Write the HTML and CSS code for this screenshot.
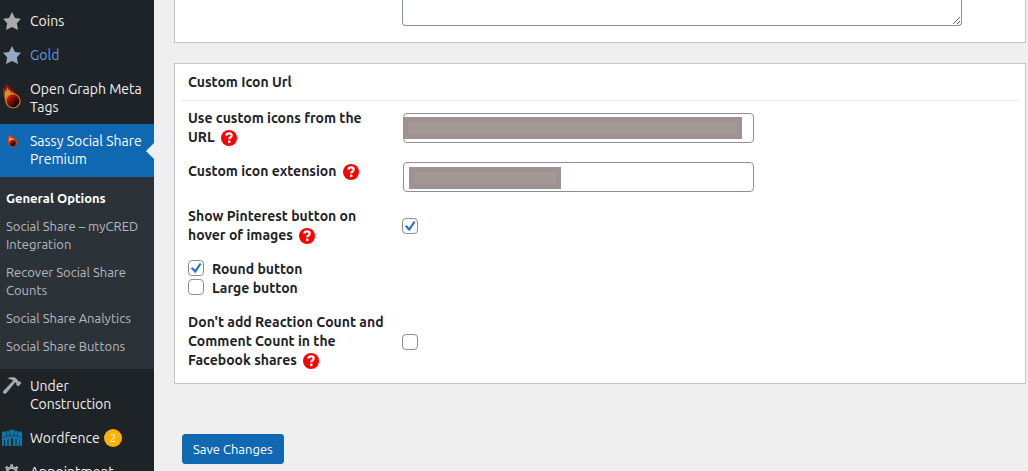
FILE: index.html
```html
<!DOCTYPE html>
<html lang="en">
<head>
    <meta charset="UTF-8">
    <meta name="viewport" content="width=device-width, initial-scale=1.0">
    <title>Sassy Social Share Premium</title>
    <link rel="stylesheet" href="styles.css">
</head>
<body>
    <svg class="defs" aria-hidden="true">
        <symbol id="star" viewBox="0 0 20 20">
            <path fill="currentColor" d="M10 1l3 6 6 .75-4.12 4.62L16 19l-6-3-6 3 1.13-6.63L1 7.75 7 7z"/>
        </symbol>
        <symbol id="help" viewBox="0 0 16 16">
            <circle cx="8" cy="8" r="8" fill="#ff0000"/>
            <path d="M5.300 5.700C5.500 3.900 6.500 3.400 8 3.400c1.600 0 2.700.8 2.700 2.100 0 1.800-2.500 1.700-2.500 3.700" fill="none" stroke="#fff" stroke-width="2.200"/>
            <rect x="7" y="10.600" width="2.400" height="2.400" fill="#fff"/>
        </symbol>
        <symbol id="comet" viewBox="0 0 20 26">
            <path fill="#b3150c" d="M2 15C1 10 .5 7 1.500 4l1.500 3L4 0l2 5 1-2 2 5 1-2 2 4 1-1 1 3c3 2 4.500 4 4.500 7a7.500 7.500 0 0 1-14 2C3 19 2.500 17 2 15z"/>
            <path fill="#c99a25" d="M2.500 13l.5-6 1.500 2L5 4l2 4 .5-2 1.500 4 1.500-1 2 3c-4 0-6 2-6.500 6L4 19z"/>
            <circle cx="11" cy="18" r="7" fill="url(#ball)" stroke="#c8791f" stroke-width="1.200"/>
        </symbol>
        <symbol id="comet-mini" viewBox="0 0 20 14">
            <path fill="#e23a12" d="M6 6V1l2 2 .5-2 2 2 1.500 1c3 2 3 3 3 5a4.500 4.500 0 0 1-8.500 1.500z"/>
            <path fill="#ffc02e" d="M7 7l.5-4 1.500 2 1-1 2 2c-2 0-4 1-4 4z"/>
            <circle cx="10.500" cy="9" r="3.200" fill="url(#ball)"/>
        </symbol>
        <linearGradient id="ball" x1="0" y1="0" x2="1" y2="1">
            <stop offset=".2" stop-color="#c81a10"/>
            <stop offset=".75" stop-color="#160504"/>
        </linearGradient>
    </svg>

    <div class="layout">
        <nav class="sidebar">
            <ul class="menu">
                <li><a href="#" class="menu-link"><svg class="icon"><use href="#star"/></svg><span>Coins</span></a></li>
                <li><a href="#" class="menu-link hovered"><svg class="icon"><use href="#star"/></svg><span>Gold</span></a></li>
                <li><a href="#" class="menu-link"><svg class="icon comet"><use href="#comet"/></svg><span>Open Graph Meta Tags</span></a></li>
                <li>
                    <a href="#" class="menu-link current"><svg class="icon comet-small"><use href="#comet-mini"/></svg><span>Sassy Social Share Premium</span></a>
                    <ul class="submenu">
                        <li><a href="#" class="active">General Options</a></li>
                        <li><a href="#">Social Share – myCRED Integration</a></li>
                        <li><a href="#">Recover Social Share Counts</a></li>
                        <li><a href="#">Social Share Analytics</a></li>
                        <li><a href="#">Social Share Buttons</a></li>
                    </ul>
                </li>
                <li><a href="#" class="menu-link">
                    <svg class="icon" viewBox="0 0 20 20"><path fill="currentColor" d="M5 2.500C9 .8 12.500 1 14.500 2.800l2.200 2.700 1.200-.2 1.400 2-3 3.200-2-1.500.2-1.500-1.300-1.200L4.500 17c-1 1-2.200 1-3 .2s-.8-1.800.2-2.800L11.200 4.800C9.500 3.300 7.500 2.700 5 2.500z"/></svg>
                    <span>Under Construction</span></a></li>
                <li><a href="#" class="menu-link">
                    <svg class="icon fence" viewBox="0 0 20 20"><path fill="currentColor" d="M0 4.500L1.500 3 3 4.200 5 2.500l1.300 1L8 1.700l1 .8 1-1.500 1 1.500 1-.8 1.700 1.800 1.300-1 2 1.700L18.500 3 20 4.500V18h-2v-6h-1v6h-2.500v-7h-1v7H11v-8H9v8H6.500v-7h-1v7H3v-6H2v6H0z"/><path stroke="#1d2327" stroke-width=".6" fill="none" d="M4.500 4v4M8 3.500V8M12 3.500V8M15.500 4v4M1 9.500Q10 6 19 9.500"/></svg>
                    <span>Wordfence <span class="count">2</span></span></a></li>
                <li><a href="#" class="menu-link">
                    <svg class="icon" viewBox="0 0 20 20"><path fill="currentColor" fill-rule="evenodd" d="M18 12h-2.200c-.2.700-.5 1.300-.8 1.900l1.600 1.600-2 2-1.600-1.600c-.6.300-1.200.6-1.900.8V19H8.300v-2.300c-.7-.2-1.300-.4-1.900-.8l-1.600 1.600-2-2 1.600-1.600c-.3-.6-.6-1.200-.8-1.900H1.400V9.200h2.200c.2-.7.500-1.300.8-1.900L2.800 5.700l2-2 1.600 1.600c.6-.3 1.200-.6 1.900-.8V2.200h2.800v2.300c.7.2 1.300.5 1.900.8l1.600-1.600 2 2L15 7.300c.3.6.6 1.200.8 1.900H18zM9.700 7.100a3.500 3.500 0 1 0 0 7 3.500 3.500 0 0 0 0-7z"/></svg>
                    <span>Appointment</span></a></li>
            </ul>
        </nav>

        <main class="content">
            <form>
                <section class="panel panel-top">
                    <textarea class="field" aria-label="Custom CSS"></textarea>
                </section>

                <section class="panel">
                    <h3>Custom Icon Url</h3>
                    <div class="options">
                        <div class="row">
                            <label for="iconUrl">Use custom icons from the URL <svg class="help"><use href="#help"/></svg></label>
                            <div class="input-wrap">
                                <input type="text" id="iconUrl" class="field">
                                <span class="mask mask-url"></span>
                            </div>
                        </div>
                        <div class="row row-top">
                            <label for="iconExt">Custom icon extension <svg class="help"><use href="#help"/></svg></label>
                            <div class="input-wrap">
                                <input type="text" id="iconExt" class="field">
                                <span class="mask mask-ext"></span>
                            </div>
                        </div>
                        <div class="row">
                            <label for="pinterest">Show Pinterest button on hover of images <svg class="help"><use href="#help"/></svg></label>
                            <input type="checkbox" id="pinterest" checked>
                        </div>
                        <div class="checks">
                            <label><input type="checkbox" checked>Round button</label>
                            <label><input type="checkbox">Large button</label>
                        </div>
                        <div class="row">
                            <label for="reaction">Don't add Reaction Count and Comment Count in the Facebook shares <svg class="help"><use href="#help"/></svg></label>
                            <input type="checkbox" id="reaction">
                        </div>
                    </div>
                </section>

                <button type="submit" class="btn">Save Changes</button>
            </form>
        </main>
    </div>
</body>
</html>
```
FILE: styles.css
```css
* {
    box-sizing: border-box;
}
body {
    margin: 0;
    background-color: #efefef;
    color: #1d2327;
    font-family: Ubuntu, "Noto Sans", "Open Sans", sans-serif;
    font-size: 14px;
    line-height: 19px;
}
.defs {
    position: absolute;
    width: 0;
    height: 0;
}
.layout {
    display: flex;
    height: 100vh;
    overflow: hidden;
}

/* Sidebar */
.sidebar {
    flex: 0 0 154px;
    padding-top: 4px;
    background-color: #1d2327;
}
.menu,
.submenu {
    list-style: none;
    margin: 0;
    padding: 0;
}
.menu-link {
    display: flex;
    align-items: flex-start;
    gap: 8px;
    padding: 8px 8px 8px 2px;
    color: #f0f0f1;
    line-height: 18px;
    text-decoration: none;
}
.icon {
    flex: none;
    width: 20px;
    height: 20px;
    margin: -1px 0;
    color: #a7aaad;
}
.hovered {
    color: #5f9be6;
}
.hovered .icon {
    color: #93a9c2;
}
.comet {
    height: 28px;
    margin-top: 2px;
}
.comet-small {
    height: 14px;
    margin-top: 2px;
}
.fence {
    color: #0e76a8;
}
.current {
    position: relative;
    padding-bottom: 9px;
    background-color: #1068b3;
    color: #fff;
}
.current::after {
    content: "";
    position: absolute;
    right: 0;
    top: 50%;
    margin-top: -8px;
    border: 8px solid transparent;
    border-left-width: 0;
    border-right-color: #efefef;
}
.submenu {
    padding: 7px 0 9px;
    background-color: #2c3338;
}
.submenu a {
    display: block;
    padding: 5px 6px;
    color: #b4b9be;
    font-size: 13px;
    line-height: 18px;
    text-decoration: none;
}
.submenu .active {
    color: #fff;
    font-weight: 600;
}
.count {
    display: inline-block;
    width: 18px;
    margin-left: 1px;
    border-radius: 9px;
    background-color: #ffb200;
    color: #fff;
    font-size: 11px;
    text-align: center;
    vertical-align: top;
}

/* Content */
.content {
    flex: 1;
    padding: 0 2px 0 20px;
}
.panel {
    margin-bottom: 50px;
    border: 1px solid #c3c4c7;
    background-color: #fff;
}
.panel-top {
    margin-bottom: 20px;
    padding: 0 63px 16px 227px;
    border-top: 0;
}
.panel h3 {
    margin: 0 4px 0 6px;
    padding: 9px 7px 8px;
    border-bottom: 1px solid #eee;
    font-size: 14px;
    font-weight: 600;
}
.options {
    display: flex;
    flex-direction: column;
    gap: 15px;
    padding: 8px 13px 13px;
    font-weight: 600;
}
.row {
    display: grid;
    grid-template-columns: 200px 1fr;
    column-gap: 14px;
    align-items: center;
}
.row-top {
    align-items: start;
}
.field {
    display: block;
    width: 100%;
    height: 30px;
    border: 1px solid #8c8f94;
    border-radius: 4px;
    background-color: #fff;
    font: inherit;
}
textarea.field {
    height: 26px;
    border-top: 0;
    border-radius: 0 0 4px 4px;
}
.input-wrap {
    position: relative;
    max-width: 351px;
    margin-left: 1px;
}
.mask {
    position: absolute;
    height: 22px;
    border: 5px solid #9e9292;
    background-color: #a39896;
}
.mask-url {
    top: 4px;
    left: 0;
    width: 339px;
}
.mask-ext {
    top: 5px;
    left: 6px;
    width: 152px;
}
.help {
    width: 16px;
    height: 16px;
    margin-left: 3px;
    vertical-align: -4px;
}
input[type="checkbox"] {
    flex: none;
    appearance: none;
    width: 16px;
    height: 16px;
    margin: 0;
    border: 1px solid #8c8f94;
    border-radius: 4px;
    background-color: #fff;
}
input[type="checkbox"]:checked::before {
    content: "";
    display: block;
    width: 14px;
    height: 14px;
    background-color: #1f76c8;
    clip-path: polygon(12% 51%, 28% 45%, 43% 62%, 77% 14%, 89% 22%, 46% 87%);
}
.checks label {
    display: flex;
    gap: 8px;
}
.btn {
    display: block;
    height: 30px;
    margin-left: 8px;
    padding: 0 10px;
    border: 1px solid #1068b3;
    border-radius: 3px;
    background-color: #1068b3;
    color: #fff;
    font: inherit;
    font-size: 13px;
    cursor: pointer;
}
```
